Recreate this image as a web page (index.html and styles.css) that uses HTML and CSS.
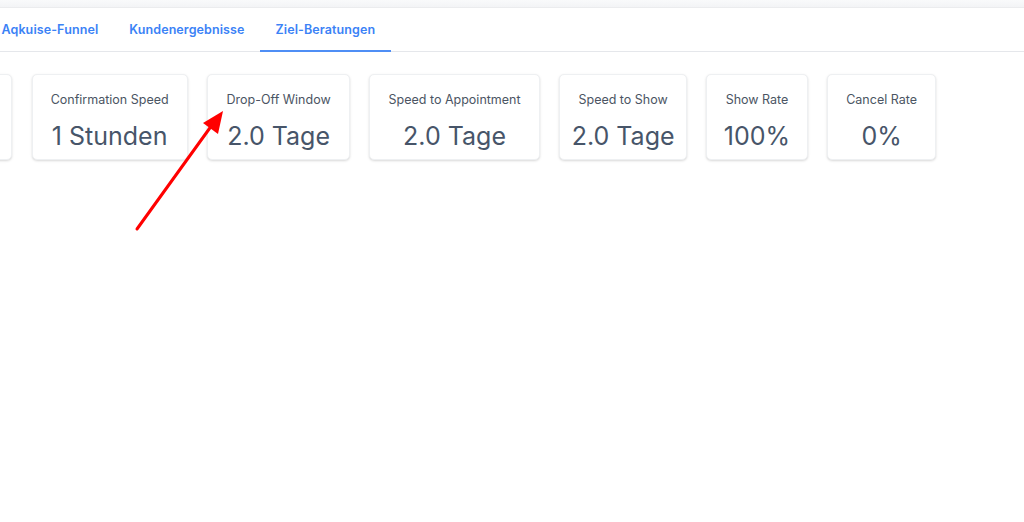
FILE: index.html
```html
<!DOCTYPE html>
<html lang="de">
<head>
<meta charset="utf-8">
<title>Ziel-Beratungen</title>
<link rel="stylesheet" href="styles.css">
</head>
<body>
<div class="topstrip"></div>
<nav class="tabs">
  <a class="tab">Aqkuise-Funnel</a>
  <a class="tab">Kundenergebnisse</a>
  <a class="tab active">Ziel-Beratungen</a>
</nav>
<main class="content">
  <div class="cards">
    <div class="card partial"></div>
    <div class="card"><div class="label">Confirmation Speed</div><div class="value-wrap"><span class="value">1 Stunden</span></div></div>
    <div class="card"><div class="label">Drop-Off Window</div><div class="value-wrap"><span class="value">2.0 Tage</span></div></div>
    <div class="card"><div class="label">Speed to Appointment</div><div class="value-wrap"><span class="value">2.0 Tage</span></div></div>
    <div class="card"><div class="label">Speed to Show</div><div class="value-wrap"><span class="value">2.0 Tage</span></div></div>
    <div class="card"><div class="label">Show Rate</div><div class="value-wrap"><span class="value">100%</span></div></div>
    <div class="card"><div class="label">Cancel Rate</div><div class="value-wrap"><span class="value">0%</span></div></div>
  </div>
  <svg class="arrow" width="1024" height="522" viewBox="0 0 1024 522">
    <line x1="137" y1="229" x2="212" y2="125" stroke="#ff0000" stroke-width="3" stroke-linecap="round"/>
    <polygon points="223,111 218,134 203,123" fill="#ff0000"/>
  </svg>
</main>
</body>
</html>
```
FILE: styles.css
```css
html, body {
  margin: 0;
  padding: 0;
  background: #ffffff;
  font-family: Inter, "Noto Sans", sans-serif;
  overflow: hidden;
  width: 1024px;
  height: 522px;
}
.topstrip {
  height: 7px;
  background: linear-gradient(#f9fafb, #f3f4f6);
  border-bottom: 1px solid #ebecee;
}
.tabs {
  display: flex;
  height: 43px;
  border-bottom: 1px solid #e5e7eb;
  margin-left: -14px;
}
.tab {
  display: flex;
  align-items: center;
  padding: 0 15.5px;
  font-size: 12.5px;
  font-weight: 600;
  color: #3b82f6;
  letter-spacing: 0.1px;
  border-bottom: 2px solid transparent;
  margin-bottom: -1px;
  cursor: pointer;
}
.tab.active {
  border-bottom-color: #4f8ef5;
}
.content {
  position: relative;
  height: 470px;
}
.cards {
  display: flex;
  gap: 19.5px;
  padding-top: 22px;
  margin-left: -120px;
  align-items: flex-start;
}
.card {
  background: #fff;
  border-radius: 5px;
  border: 1px solid #eef0f2;
  box-shadow: 0 1px 3px rgba(0, 0, 0, 0.1), 0 1px 2px rgba(0, 0, 0, 0.06);
  padding: 17px 18.2px 10px;
  text-align: center;
  height: 86px;
  box-sizing: border-box;
  flex: none;
}
.card.partial {
  width: 132px;
}
.label {
  font-size: 12.5px;
  line-height: 16px;
  color: #4b5563;
  white-space: nowrap;
}
.value-wrap {
  display: flex;
  justify-content: center;
  width: 0;
  min-width: 100%;
  margin-top: 13px;
}
.value {
  flex: none;
  font-size: 25px;
  line-height: 30px;
  color: #475569;
  white-space: nowrap;
}
.arrow {
  position: absolute;
  left: 0;
  top: -52px;
  pointer-events: none;
}
```
